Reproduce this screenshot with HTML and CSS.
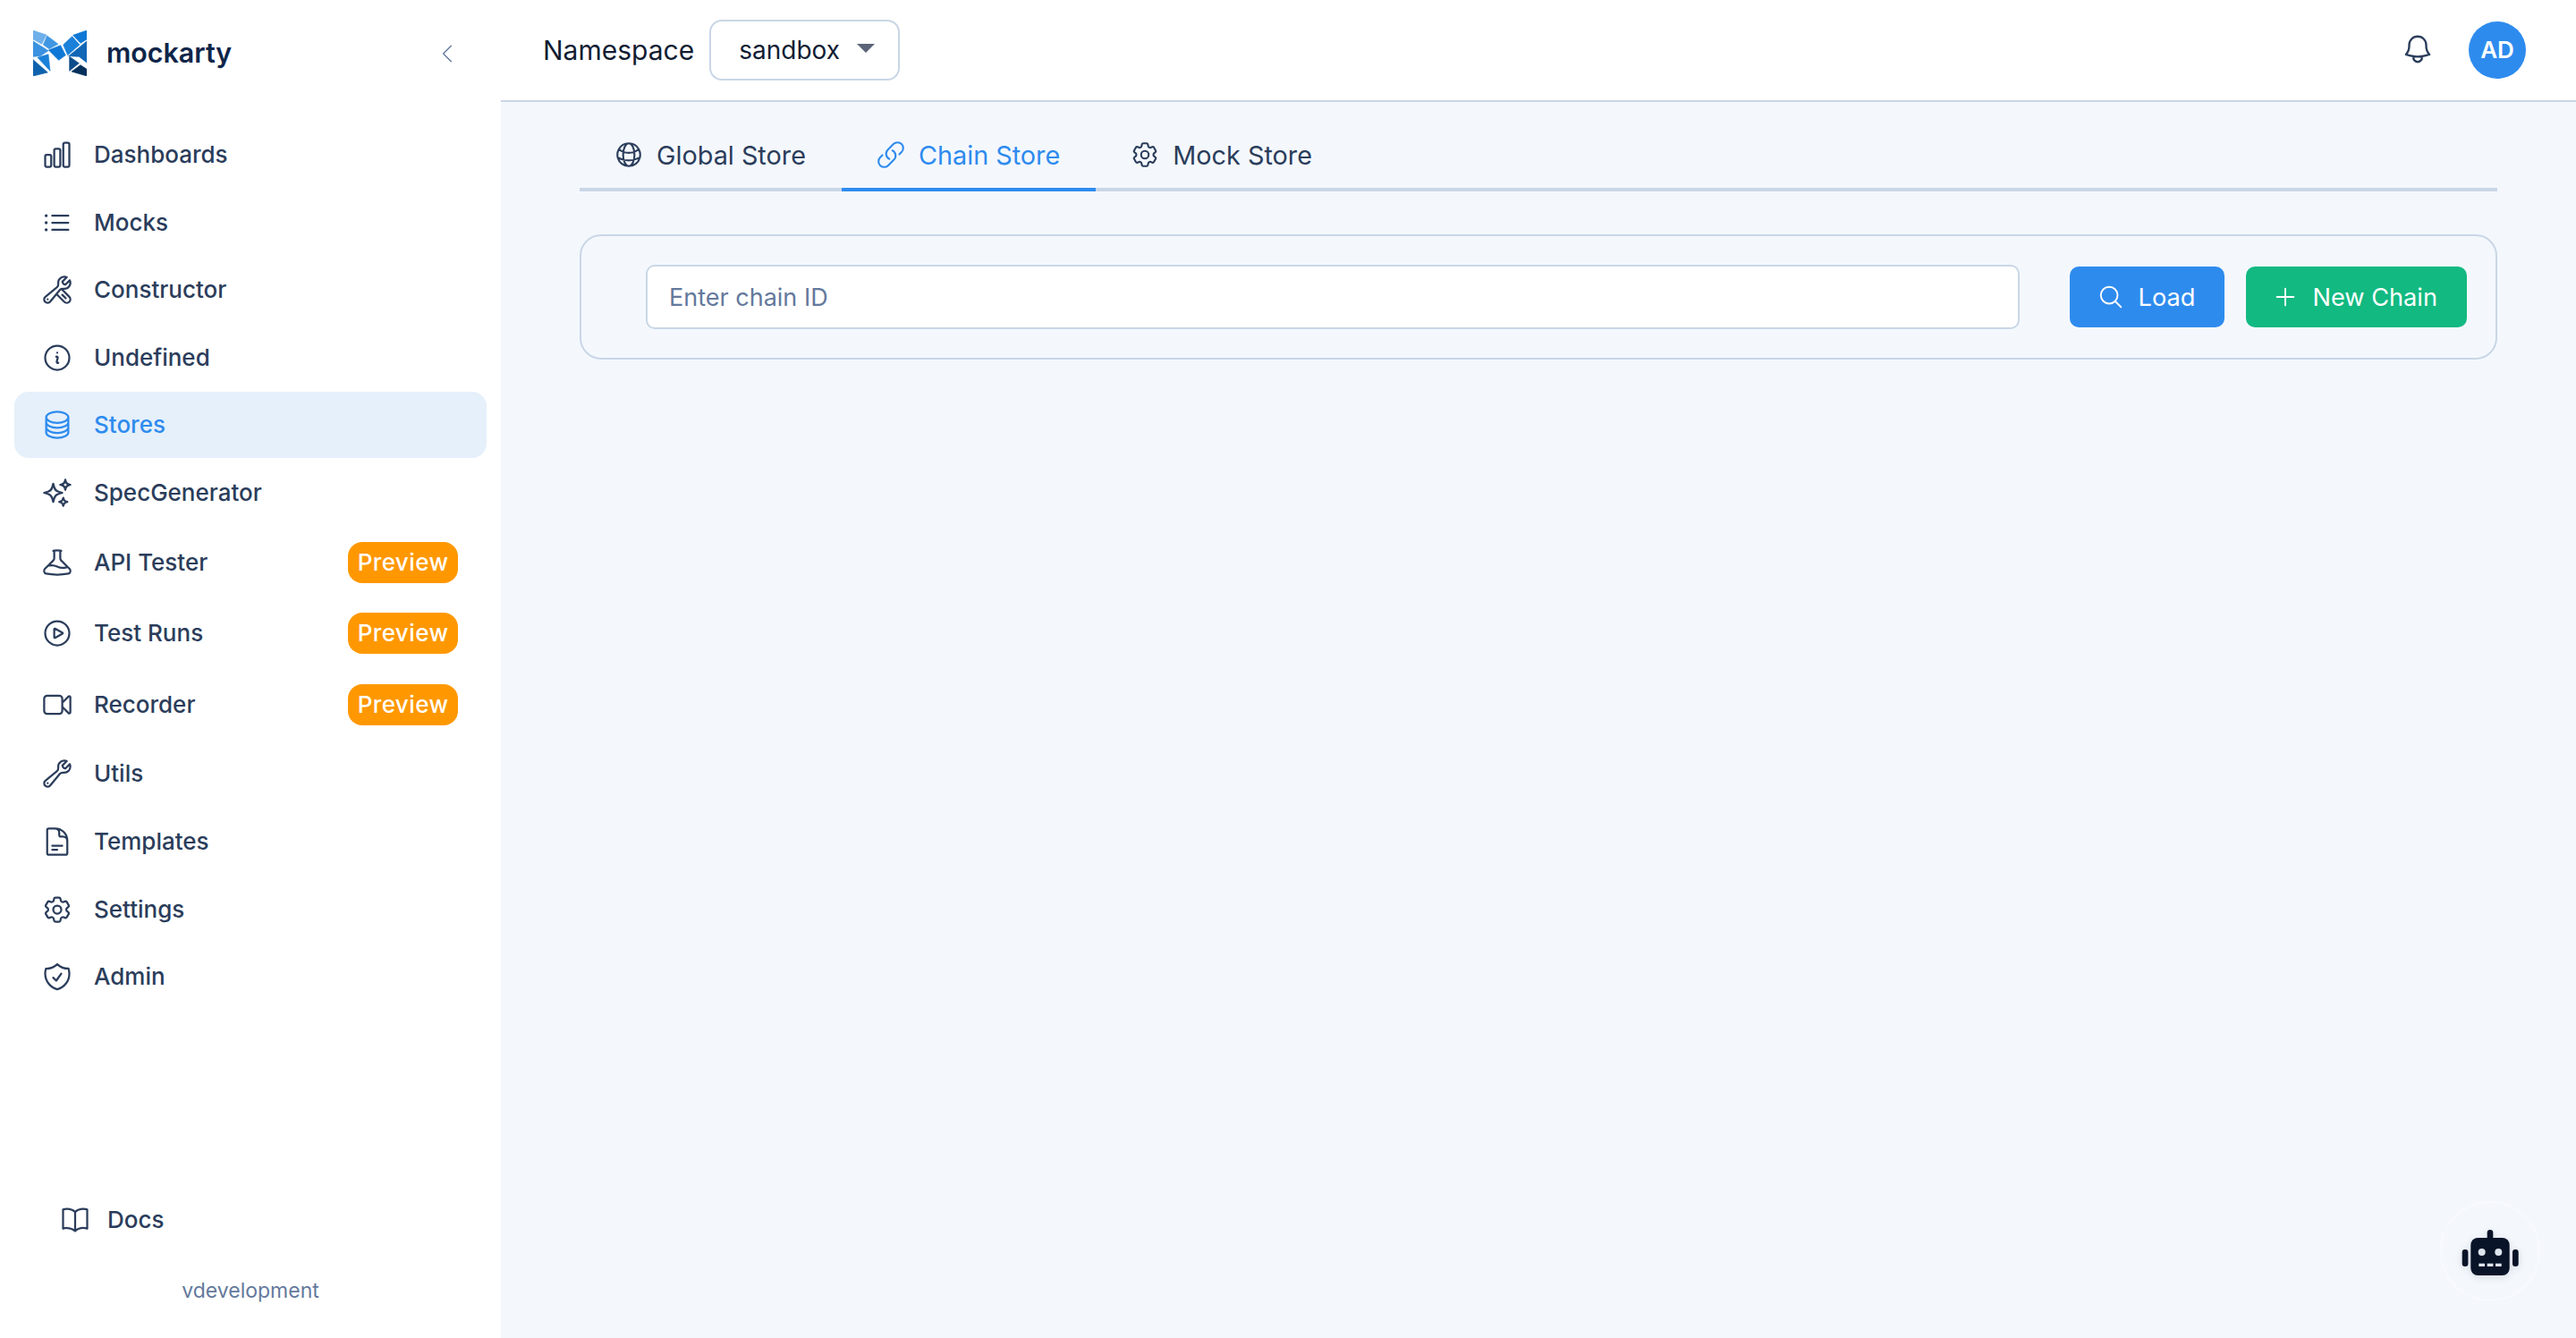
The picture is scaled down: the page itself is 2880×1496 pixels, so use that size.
FILE: index.html
```html
<!DOCTYPE html>
<html>
<head>
<title>mockarty</title>
<link rel="stylesheet" href="styles.css">
</head>
<body>
	<aside class="sidebar">
		<div class="brand">
			<svg class="logo" viewBox="0 0 180 153">
				<polygon fill="#6fb0ea" stroke="#6fb0ea" points="0,0 45,15 29,46 0,30"/>
				<polygon fill="#3f97e3" stroke="#3f97e3" points="47,18 84,46 54,62 34,48"/>
				<polygon fill="#3a92e0" stroke="#3a92e0" points="0,36 29,54 51,68 24,86 0,88"/>
				<polygon fill="#1a80d9" stroke="#1a80d9" points="15,91 51,80 57,136"/>
				<polygon fill="#0f62ae" stroke="#0f62ae" points="0,98 49,141 0,153"/>
				<polygon fill="#0f78d6" stroke="#0f78d6" points="52,66 92,50 109,83 86,100"/>
				<polygon fill="#1a80d9" stroke="#1a80d9" points="101,48 131,20 156,48 116,83"/>
				<polygon fill="#0f78d6" stroke="#0f78d6" points="134,16 180,0 180,30 159,43"/>
				<polygon fill="#1166b5" stroke="#1166b5" points="119,86 161,52 180,36 180,108 154,88"/>
				<polygon fill="#0c4c8a" stroke="#0c4c8a" points="122,88 154,110 122,136"/>
				<polygon fill="#04305c" stroke="#04305c" points="129,138 159,116 180,130 180,153"/>
			</svg>
			<span class="brand-name">mockarty</span>
			<svg class="icon collapse" viewBox="0 0 24 24"><path d="M15.75 19.5 8.25 12l7.5-7.5"/></svg>
		</div>
		<nav class="nav">
			<a class="nav-item">
				<svg class="icon" viewBox="0 0 24 24"><path d="M3 13.125C3 12.504 3.504 12 4.125 12h2.25c.621 0 1.125.504 1.125 1.125v6.75C7.5 20.496 6.996 21 6.375 21h-2.25A1.125 1.125 0 0 1 3 19.875v-6.75ZM9.75 8.625c0-.621.504-1.125 1.125-1.125h2.25c.621 0 1.125.504 1.125 1.125v11.25c0 .621-.504 1.125-1.125 1.125h-2.25a1.125 1.125 0 0 1-1.125-1.125V8.625ZM16.5 4.125c0-.621.504-1.125 1.125-1.125h2.25C20.496 3 21 3.504 21 4.125v15.75c0 .621-.504 1.125-1.125 1.125h-2.25a1.125 1.125 0 0 1-1.125-1.125V4.125Z"/></svg>
				<span>Dashboards</span>
			</a>
			<a class="nav-item">
				<svg class="icon" viewBox="0 0 24 24"><path d="M8.25 6.75h12M8.25 12h12m-12 5.25h12M3.75 6.75h.007v.008H3.75V6.75Zm.375 0a.375.375 0 1 1-.75 0 .375.375 0 0 1 .75 0ZM3.75 12h.007v.008H3.75V12Zm.375 0a.375.375 0 1 1-.75 0 .375.375 0 0 1 .75 0Zm-.375 5.25h.007v.008H3.75v-.008Zm.375 0a.375.375 0 1 1-.75 0 .375.375 0 0 1 .75 0Z"/></svg>
				<span>Mocks</span>
			</a>
			<a class="nav-item">
				<svg class="icon" viewBox="0 0 24 24"><path d="M11.42 15.17 17.25 21A2.652 2.652 0 0 0 21 17.25l-5.877-5.877M11.42 15.17l2.496-3.03c.317-.384.74-.626 1.208-.766M11.42 15.17l-4.655 5.653a2.548 2.548 0 1 1-3.586-3.586l6.837-5.63m5.108-.233c.55-.164 1.163-.188 1.743-.14a4.5 4.5 0 0 0 4.486-6.336l-3.276 3.277a3.004 3.004 0 0 1-2.25-2.25l3.276-3.276a4.5 4.5 0 0 0-6.336 4.486c.091 1.076-.071 2.264-.904 2.95l-.102.085l-1.745 1.437M18.375 18.375 15.75 15.75M4.867 19.125h.008v.008h-.008v-.008Z"/></svg>
				<span>Constructor</span>
			</a>
			<a class="nav-item">
				<svg class="icon" viewBox="0 0 24 24"><path d="m11.25 11.25.041-.02a.75.75 0 0 1 1.063.852l-.708 2.836a.75.75 0 0 0 1.063.853l.041-.021M21 12a9 9 0 1 1-18 0 9 9 0 0 1 18 0Zm-9-3.75h.008v.008H12V8.25Z"/></svg>
				<span>Undefined</span>
			</a>
			<a class="nav-item active">
				<svg class="icon" viewBox="0 0 24 24"><path d="M20.25 6.375c0 2.278-3.694 4.125-8.25 4.125S3.75 8.653 3.75 6.375m16.5 0c0-2.278-3.694-4.125-8.25-4.125S3.75 4.097 3.75 6.375m16.5 0v11.25c0 2.278-3.694 4.125-8.25 4.125s-8.25-1.847-8.25-4.125V6.375m16.5 0v3.75m-16.5-3.75v3.75m16.5 0v3.75C20.25 16.153 16.556 18 12 18s-8.25-1.847-8.25-4.125v-3.75m16.5 0c0 2.278-3.694 4.125-8.25 4.125s-8.25-1.847-8.25-4.125"/></svg>
				<span>Stores</span>
			</a>
			<a class="nav-item">
				<svg class="icon" viewBox="0 0 24 24"><path d="M9.813 15.904 9 18.75l-.813-2.846a4.5 4.5 0 0 0-3.09-3.09L2.25 12l2.846-.813a4.5 4.5 0 0 0 3.09-3.09L9 5.25l.813 2.846a4.5 4.5 0 0 0 3.09 3.09L15.75 12l-2.846.813a4.5 4.5 0 0 0-3.09 3.09ZM18.259 8.715 18 9.75l-.259-1.035a3.375 3.375 0 0 0-2.455-2.456L14.25 6l1.036-.259a3.375 3.375 0 0 0 2.455-2.456L18 2.25l.259 1.035a3.375 3.375 0 0 0 2.456 2.456L21.75 6l-1.035.259a3.375 3.375 0 0 0-2.456 2.456ZM16.894 20.567 16.5 21.75l-.394-1.183a2.25 2.25 0 0 0-1.423-1.423L13.5 18.75l1.183-.394a2.25 2.25 0 0 0 1.423-1.423l.394-1.183.394 1.183a2.25 2.25 0 0 0 1.423 1.423l1.183.394-1.183.394a2.25 2.25 0 0 0-1.423 1.423Z"/></svg>
				<span>SpecGenerator</span>
			</a>
			<a class="nav-item">
				<svg class="icon" viewBox="0 0 24 24"><path d="M9.75 3.104v5.714a2.25 2.25 0 0 1-.659 1.591L5 14.5M9.75 3.104c-.251.023-.501.05-.75.082m.75-.082a24.301 24.301 0 0 1 4.5 0m0 0v5.714c0 .597.237 1.17.659 1.591L19.8 15.3M14.25 3.104c.251.023.501.05.75.082M19.8 15.3l-1.57.393A9.065 9.065 0 0 1 12 15a9.065 9.065 0 0 0-6.23-.693L5 14.5m14.8.8 1.402 1.402c1.232 1.232.65 3.318-1.067 3.611A48.309 48.309 0 0 1 12 21c-2.773 0-5.491-.235-8.135-.687-1.718-.293-2.3-2.379-1.067-3.61L5 14.5"/></svg>
				<span>API Tester</span>
				<span class="badge">Preview</span>
			</a>
			<a class="nav-item">
				<svg class="icon" viewBox="0 0 24 24"><path d="M21 12a9 9 0 1 1-18 0 9 9 0 0 1 18 0Z"/><path d="M15.91 11.672a.375.375 0 0 1 0 .656l-5.603 3.113a.375.375 0 0 1-.557-.328V8.887c0-.286.307-.466.557-.327l5.603 3.112Z"/></svg>
				<span>Test Runs</span>
				<span class="badge">Preview</span>
			</a>
			<a class="nav-item">
				<svg class="icon" viewBox="0 0 24 24"><path d="m15.75 10.5 4.72-4.72a.75.75 0 0 1 1.28.53v11.38a.75.75 0 0 1-1.28.53l-4.72-4.72M4.5 18.75h9a2.25 2.25 0 0 0 2.25-2.25v-9a2.25 2.25 0 0 0-2.25-2.25h-9A2.25 2.25 0 0 0 2.25 7.5v9a2.25 2.25 0 0 0 2.25 2.25Z"/></svg>
				<span>Recorder</span>
				<span class="badge">Preview</span>
			</a>
			<a class="nav-item">
				<svg class="icon" viewBox="0 0 24 24"><path d="M21.75 6.75a4.5 4.5 0 0 1-4.884 4.484c-1.076-.091-2.264.071-2.95.904l-7.152 8.684a2.548 2.548 0 1 1-3.586-3.586l8.684-7.152c.833-.686.995-1.874.904-2.95a4.5 4.5 0 0 1 6.336-4.486l-3.276 3.276a3.004 3.004 0 0 0 2.25 2.25l3.276-3.276c.256.565.398 1.192.398 1.852Z"/><path d="M4.867 19.125h.008v.008h-.008v-.008Z"/></svg>
				<span>Utils</span>
			</a>
			<a class="nav-item">
				<svg class="icon" viewBox="0 0 24 24"><path d="M19.5 14.25v-2.625a3.375 3.375 0 0 0-3.375-3.375h-1.5A1.125 1.125 0 0 1 13.5 7.125v-1.5a3.375 3.375 0 0 0-3.375-3.375H8.25m0 12.75h7.5m-7.5 3H12M10.5 2.25H5.625c-.621 0-1.125.504-1.125 1.125v17.25c0 .621.504 1.125 1.125 1.125h12.75c.621 0 1.125-.504 1.125-1.125V11.25a9 9 0 0 0-9-9Z"/></svg>
				<span>Templates</span>
			</a>
			<a class="nav-item">
				<svg class="icon" viewBox="0 0 24 24"><path d="M9.594 3.94c.09-.542.56-.94 1.11-.94h2.593c.55 0 1.02.398 1.11.94l.213 1.281c.063.374.313.686.645.87.074.04.147.083.22.127.325.196.72.257 1.075.124l1.217-.456a1.125 1.125 0 0 1 1.37.49l1.296 2.247a1.125 1.125 0 0 1-.26 1.431l-1.003.827c-.293.241-.438.613-.43.992a7.723 7.723 0 0 1 0 .255c-.008.378.137.75.43.991l1.004.827c.424.35.534.955.26 1.43l-1.298 2.247a1.125 1.125 0 0 1-1.369.491l-1.217-.456c-.355-.133-.75-.072-1.076.124a6.47 6.47 0 0 1-.22.128c-.331.183-.581.495-.644.869l-.213 1.281c-.09.543-.56.94-1.11.94h-2.594c-.55 0-1.019-.398-1.11-.94l-.213-1.281c-.062-.374-.312-.686-.644-.87a6.52 6.52 0 0 1-.22-.127c-.325-.196-.72-.257-1.076-.124l-1.217.456a1.125 1.125 0 0 1-1.369-.49l-1.297-2.247a1.125 1.125 0 0 1 .26-1.431l1.004-.827c.292-.24.437-.613.43-.991a6.932 6.932 0 0 1 0-.255c.007-.38-.138-.751-.43-.992l-1.004-.827a1.125 1.125 0 0 1-.26-1.43l1.297-2.247a1.125 1.125 0 0 1 1.37-.491l1.216.456c.356.133.751.072 1.076-.124.072-.044.146-.086.22-.128.332-.183.582-.495.644-.869l.214-1.28Z"/><path d="M15 12a3 3 0 1 1-6 0 3 3 0 0 1 6 0Z"/></svg>
				<span>Settings</span>
			</a>
			<a class="nav-item">
				<svg class="icon" viewBox="0 0 24 24"><path d="M9 12.75 11.25 15 15 9.75m-3-7.036A11.959 11.959 0 0 1 3.598 6 11.99 11.99 0 0 0 3 9.749c0 5.592 3.824 10.29 9 11.623 5.176-1.332 9-6.03 9-11.622 0-1.31-.21-2.571-.598-3.751h-.152c-3.196 0-6.1-1.248-8.25-3.285Z"/></svg>
				<span>Admin</span>
			</a>
		</nav>
		<div class="side-footer">
			<a class="docs-link">
				<svg class="icon" viewBox="0 0 24 24"><path d="M12 6.042A8.967 8.967 0 0 0 6 3.75c-1.052 0-2.062.18-3 .512v14.25A8.987 8.987 0 0 1 6 18c2.305 0 4.408.867 6 2.292m0-14.25a8.966 8.966 0 0 1 6-2.292c1.052 0 2.062.18 3 .512v14.25A8.987 8.987 0 0 0 18 18a8.967 8.967 0 0 0-6 2.292m0-14.25v14.25"/></svg>
				<span>Docs</span>
			</a>
			<div class="version">vdevelopment</div>
		</div>
	</aside>
	<div class="page">
		<header class="topbar">
			<span class="ns-label">Namespace</span>
			<div class="ns-select">
				<span>sandbox</span>
				<span class="caret"></span>
			</div>
			<svg class="icon bell" viewBox="0 0 24 24"><path d="M14.857 17.082a23.848 23.848 0 0 0 5.454-1.31A8.967 8.967 0 0 1 18 9.75V9A6 6 0 0 0 6 9v.75a8.967 8.967 0 0 1-2.312 6.022c1.733.64 3.56 1.085 5.455 1.31m5.714 0a24.255 24.255 0 0 1-5.714 0m5.714 0a3 3 0 1 1-5.714 0"/></svg>
			<div class="avatar">AD</div>
		</header>
		<main class="content">
			<div class="tabs">
				<a class="tab">
					<svg class="icon" viewBox="0 0 24 24"><path d="M12 21a9.004 9.004 0 0 0 8.716-6.747M12 21a9.004 9.004 0 0 1-8.716-6.747M12 21c2.485 0 4.5-4.03 4.5-9S14.485 3 12 3m0 18c-2.485 0-4.5-4.03-4.5-9S9.515 3 12 3m0 0a8.997 8.997 0 0 1 7.843 4.582M12 3a8.997 8.997 0 0 0-7.843 4.582m15.686 0A11.953 11.953 0 0 1 12 10.5c-2.998 0-5.74-1.1-7.843-2.918m15.686 0A8.959 8.959 0 0 1 21 12c0 .778-.099 1.533-.284 2.253m0 0A17.919 17.919 0 0 1 12 16.5c-3.162 0-6.133-.815-8.716-2.247m0 0A9.015 9.015 0 0 1 3 12c0-1.605.42-3.113 1.157-4.418"/></svg>
					<span>Global Store</span>
				</a>
				<a class="tab active">
					<svg class="icon" viewBox="0 0 24 24"><path d="M13.19 8.688a4.5 4.5 0 0 1 1.242 7.244l-4.5 4.5a4.5 4.5 0 0 1-6.364-6.364l1.757-1.757m13.35-.622 1.757-1.757a4.5 4.5 0 0 0-6.364-6.364l-4.5 4.5a4.5 4.5 0 0 0 1.242 7.244"/></svg>
					<span>Chain Store</span>
				</a>
				<a class="tab">
					<svg class="icon" viewBox="0 0 24 24"><path d="M9.594 3.94c.09-.542.56-.94 1.11-.94h2.593c.55 0 1.02.398 1.11.94l.213 1.281c.063.374.313.686.645.87.074.04.147.083.22.127.325.196.72.257 1.075.124l1.217-.456a1.125 1.125 0 0 1 1.37.49l1.296 2.247a1.125 1.125 0 0 1-.26 1.431l-1.003.827c-.293.241-.438.613-.43.992a7.723 7.723 0 0 1 0 .255c-.008.378.137.75.43.991l1.004.827c.424.35.534.955.26 1.43l-1.298 2.247a1.125 1.125 0 0 1-1.369.491l-1.217-.456c-.355-.133-.75-.072-1.076.124a6.47 6.47 0 0 1-.22.128c-.331.183-.581.495-.644.869l-.213 1.281c-.09.543-.56.94-1.11.94h-2.594c-.55 0-1.019-.398-1.11-.94l-.213-1.281c-.062-.374-.312-.686-.644-.87a6.52 6.52 0 0 1-.22-.127c-.325-.196-.72-.257-1.076-.124l-1.217.456a1.125 1.125 0 0 1-1.369-.49l-1.297-2.247a1.125 1.125 0 0 1 .26-1.431l1.004-.827c.292-.24.437-.613.43-.991a6.932 6.932 0 0 1 0-.255c.007-.38-.138-.751-.43-.992l-1.004-.827a1.125 1.125 0 0 1-.26-1.43l1.297-2.247a1.125 1.125 0 0 1 1.37-.491l1.216.456c.356.133.751.072 1.076-.124.072-.044.146-.086.22-.128.332-.183.582-.495.644-.869l.214-1.28Z"/><path d="M15 12a3 3 0 1 1-6 0 3 3 0 0 1 6 0Z"/></svg>
					<span>Mock Store</span>
				</a>
			</div>
			<div class="search-card">
				<input class="chain-input" type="text" placeholder="Enter chain ID">
				<button class="btn btn-load">
					<svg class="icon" viewBox="0 0 24 24"><path d="m21 21-5.197-5.197m0 0A7.5 7.5 0 1 0 5.196 5.196a7.5 7.5 0 0 0 10.607 10.607Z"/></svg>
					<span>Load</span>
				</button>
				<button class="btn btn-new">
					<svg class="icon" viewBox="0 0 24 24"><path d="M12 4.5v15m7.5-7.5h-15"/></svg>
					<span>New Chain</span>
				</button>
			</div>
		</main>
	</div>
	<div class="bot-button">
		<svg viewBox="0 0 64 64" width="64" height="64">
			<rect x="28.7" y="8" width="6.6" height="12" rx="3.3"/>
			<rect x="10.3" y="17" width="43.4" height="42" rx="8"/>
			<rect x="0.7" y="30" width="6.7" height="19" rx="3"/>
			<rect x="57" y="30" width="6.7" height="19" rx="3"/>
			<circle class="bot-face" cx="22.7" cy="33" r="4"/>
			<circle class="bot-face" cx="41.3" cy="33" r="4"/>
			<rect class="bot-face" x="19.3" y="45.7" width="6.7" height="3.3"/>
			<rect class="bot-face" x="28.7" y="45.7" width="6.7" height="3.3"/>
			<rect class="bot-face" x="38" y="45.7" width="6.7" height="3.3"/>
		</svg>
	</div>
</body>
</html>
```

FILE: styles.css
```css
* {
	box-sizing: border-box;
}
html, body {
	height: 100%;
}
body {
	margin: 0;
	display: flex;
	height: 1496px;
	overflow: hidden;
	font-family: "Inter", "Liberation Sans", sans-serif;
	color: #2b3d5b;
	background-color: #f4f8fd;
}
.icon {
	width: 36px;
	height: 36px;
	flex: none;
	fill: none;
	stroke: currentColor;
	stroke-width: 1.5;
	stroke-linecap: round;
	stroke-linejoin: round;
}

/* sidebar */
.sidebar {
	width: 560px;
	flex: none;
	display: flex;
	flex-direction: column;
	background-color: #fff;
	padding: 0 16px;
}
.brand {
	height: 136px;
	flex: none;
	display: flex;
	align-items: flex-start;
	padding: 34px 0 0 21px;
}
.logo {
	width: 60px;
	height: 51px;
	flex: none;
	stroke-width: 2;
}
.brand-name {
	margin-left: 22px;
	font-size: 30.4px;
	font-weight: 600;
	line-height: 50px;
	color: #0f2549;
}
.collapse {
	width: 28px;
	height: 28px;
	margin: 12px 30px 0 auto;
	color: #64789b;
	stroke-width: 1.2;
}
.nav {
	display: flex;
	flex-direction: column;
	gap: 1.6px;
}
.nav-item {
	display: flex;
	align-items: center;
	gap: 23px;
	padding: 16px 32px 16px 30px;
	min-height: 74px;
	border-radius: 16px;
	font-size: 26px;
	font-weight: 500;
	line-height: 42px;
}
.nav-item.active {
	background-color: #e5f0fb;
	color: #2e8bee;
}
.badge {
	margin-left: auto;
	width: 123px;
	height: 46px;
	border-radius: 16px;
	background-color: #ff9800;
	color: #fff;
	font-size: 26px;
	font-weight: 500;
	letter-spacing: .4px;
	line-height: 46px;
	text-align: center;
}
.side-footer {
	margin-top: auto;
	padding-bottom: 38px;
}
.docs-link {
	display: flex;
	align-items: center;
	gap: 18px;
	padding-left: 50px;
	font-size: 26px;
	font-weight: 500;
	line-height: 42px;
	margin-bottom: 43px;
}
.version {
	font-size: 23px;
	line-height: 30px;
	text-align: center;
	color: #64799c;
}

/* top bar */
.page {
	flex: 1;
	display: flex;
	flex-direction: column;
	min-width: 0;
}
.topbar {
	height: 114px;
	flex: none;
	display: flex;
	align-items: flex-start;
	padding: 22px 56px 0 47px;
	background-color: #fff;
	border-bottom: 2px solid #c9d6e6;
}
.ns-label {
	font-size: 30px;
	line-height: 68px;
	color: #111d33;
}
.ns-select {
	display: flex;
	align-items: center;
	width: 213px;
	height: 68px;
	margin-left: 17px;
	padding: 0 26px 0 31px;
	border: 2px solid #c9d6e6;
	border-radius: 14px;
	font-size: 28px;
	color: #111d33;
}
.caret {
	margin-left: auto;
	margin-top: -4px;
	border-left: 10px solid transparent;
	border-right: 10px solid transparent;
	border-top: 10px solid #5b6478;
}
.bell {
	margin: 14px 38px 0 auto;
	width: 38px;
	height: 38px;
}
.avatar {
	width: 64px;
	height: 64px;
	margin-top: 2px;
	border-radius: 50%;
	background-color: #2e8bee;
	color: #fff;
	font-size: 26px;
	font-weight: 600;
	line-height: 64px;
	text-align: center;
}

/* tabs */
.content {
	flex: 1;
	padding: 22px 88px 0;
}
.tabs {
	display: flex;
	border-bottom: 4px solid #c9d6e6;
}
.tab {
	display: flex;
	align-items: center;
	gap: 14px;
	height: 78px;
	padding: 0 40px 0 38px;
	margin-bottom: -4px;
	border-bottom: 4px solid transparent;
	font-size: 28.8px;
	color: #2b3d5b;
}
.tab .icon {
	width: 34px;
	height: 34px;
}
.tab.active {
	color: #2e8bee;
	border-bottom-color: #2e8bee;
}

/* chain search */
.search-card {
	display: flex;
	align-items: center;
	margin-top: 48px;
	height: 140px;
	padding: 0 32px 0 72px;
	border: 2px solid #c9d6e6;
	border-radius: 24px;
}
.chain-input {
	flex: 1;
	min-width: 0;
	height: 72px;
	padding: 0 24px;
	border: 2px solid #c9d6e6;
	border-radius: 10px;
	background-color: #fff;
	font-family: inherit;
	font-size: 27px;
	outline: none;
}
.chain-input::placeholder {
	color: #64799c;
	opacity: 1;
}
.btn {
	display: flex;
	align-items: center;
	gap: 16px;
	height: 68px;
	padding: 0 33px 0 31px;
	border: none;
	border-radius: 10px;
	color: #fff;
	font-family: inherit;
	font-size: 27.2px;
	font-weight: 400;
}
.btn .icon {
	width: 30px;
	height: 30px;
}
.btn-load {
	margin-left: 56px;
	background-color: #2e8bee;
}
.btn-new {
	margin-left: 24px;
	padding-left: 29px;
	gap: 15px;
	background-color: #12b981;
}

/* floating robot */
.bot-button {
	position: absolute;
	left: 2728px;
	top: 1343px;
	width: 112px;
	height: 112px;
	display: flex;
	align-items: center;
	justify-content: center;
	border: 2px solid #f8fafd;
	border-radius: 50%;
}
.bot-button svg {
	fill: #0a1428;
	filter: drop-shadow(0 2px 4px rgba(10, 20, 40, .12));
}
.bot-face {
	fill: #dfe5ee;
}
```
